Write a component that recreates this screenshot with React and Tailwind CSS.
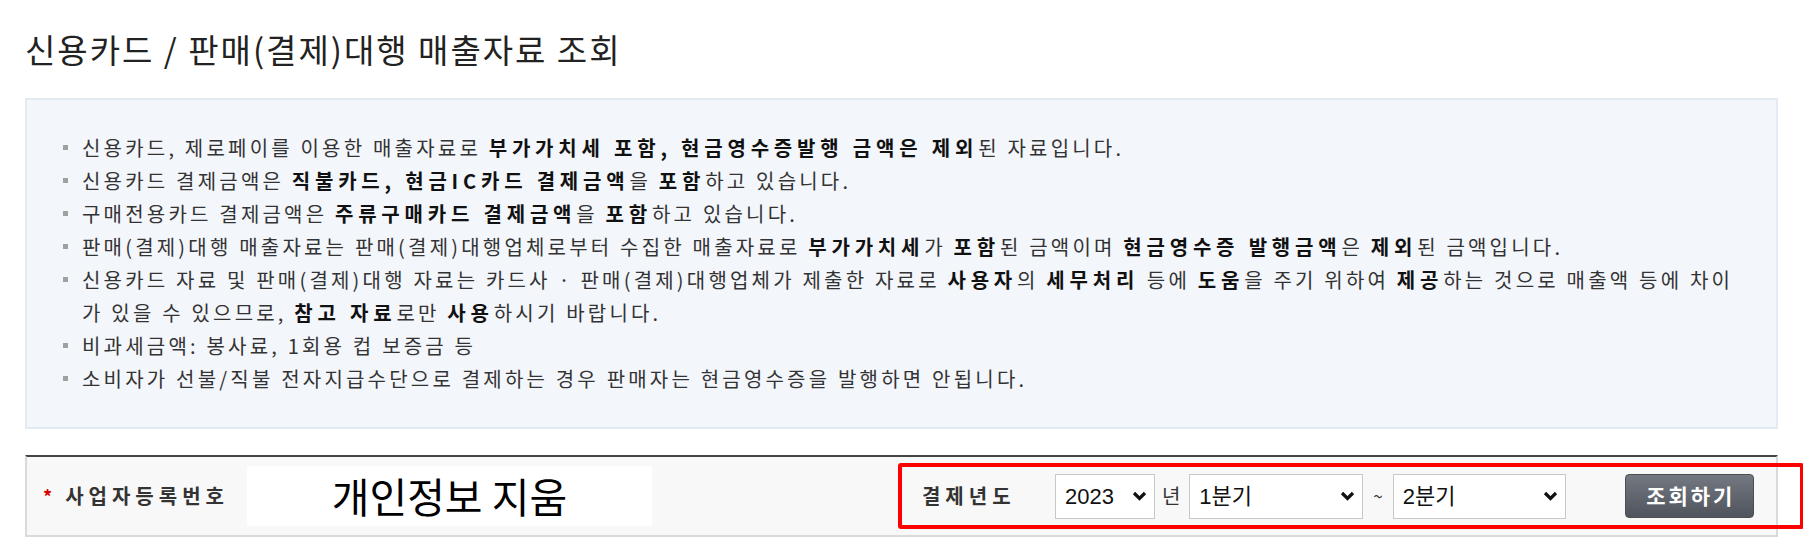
import React from 'react';

const KR = { fontFamily: '"Noto Sans CJK KR", "Noto Sans", sans-serif' };

const B = ({ children }) => <b className="font-bold tracking-[4.8px] text-[#111]">{children}</b>;

const notices = [
  [<>신용카드, 제로페이를 이용한 매출자료로 <B>부가가치세 포함, 현금영수증발행 금액은 제외</B>된 자료입니다.</>],
  [<>신용카드 결제금액은 <B>직불카드, 현금IC카드 결제금액</B>을 <B>포함</B>하고 있습니다.</>],
  [<>구매전용카드 결제금액은 <B>주류구매카드 결제금액</B>을 <B>포함</B>하고 있습니다.</>],
  [<>판매(결제)대행 매출자료는 판매(결제)대행업체로부터 수집한 매출자료로 <B>부가가치세</B>가 <B>포함</B>된 금액이며 <B>현금영수증 발행금액</B>은 <B>제외</B>된 금액입니다.</>],
  [
    <>신용카드 자료 및 판매(결제)대행 자료는 카드사 · 판매(결제)대행업체가 제출한 자료로 <B>사용자</B>의 <B>세무처리</B> 등에 <B>도움</B>을 주기 위하여 <B>제공</B>하는 것으로 매출액 등에 차이</>,
    <>가 있을 수 있으므로, <B>참고 자료</B>로만 <B>사용</B>하시기 바랍니다.</>,
  ],
  [<>비과세금액: 봉사료, 1회용 컵 보증금 등</>],
  [<>소비자가 선불/직불 전자지급수단으로 결제하는 경우 판매자는 현금영수증을 발행하면 안됩니다.</>],
];

const Chevron = () => (
  <svg width="15" height="10" viewBox="0 0 15 10" className="shrink-0">
    <path d="M2 2 L7.5 7.5 L13 2" fill="none" stroke="#111" strokeWidth="3.2" />
  </svg>
);

const Select = ({ value, width }) => (
  <div
    className={`flex h-[45px] items-center justify-between border border-[#c8c8c8] bg-white pl-[9px] pr-[7px] ${width}`}
  >
    <span className="text-[22px] text-[#111]" style={{ fontFamily: '"Liberation Sans", "Noto Sans CJK KR", sans-serif' }}>
      {value}
    </span>
    <Chevron />
  </div>
);

export default function App() {
  return (
    <div className="h-[554px] w-[1803px] bg-white px-[25px] pt-[29px]" style={KR}>
      <h1 className="h-[40px] text-[33px] font-normal leading-[40px] tracking-[2px] text-[#222]">
        신용카드 / 판매(결제)대행 매출자료 조회
      </h1>

      {/* notice box */}
      <div className="mt-[29px] h-[331px] border-2 border-[#e4eaf2] bg-[#f3f6fb] pl-[36px] pt-[31px]">
        <ul>
          {notices.map((lines, i) => (
            <li key={i} className="flex">
              <div className="flex h-[33px] w-[19px] shrink-0 items-center">
                <span className="h-[5px] w-[5px] bg-[#a0a0a0]" />
              </div>
              <div className="text-[20px] leading-[33px] tracking-[3.2px] text-[#333]">
                {lines.map((l, j) => (
                  <div key={j} className="whitespace-nowrap">{l}</div>
                ))}
              </div>
            </li>
          ))}
        </ul>
      </div>

      {/* search bar */}
      <div className="relative mt-[26px] flex h-[82px] items-center border-2 border-[#dadada] border-t-[#444] bg-[#f8f8f8]">
        <span className="ml-[16px] text-[18px] font-bold text-[#d40000]">*</span>
        <span className="ml-[13px] text-[20px] font-bold tracking-[5px] text-[#333]">사업자등록번호</span>
        <div className="ml-[18px] flex h-[60px] w-[405px] items-center justify-center bg-white text-[41px] text-black">
          개인정보 지움
        </div>

        <span className="ml-[270px] w-[133px] text-[20px] font-bold tracking-[5px] text-[#333]">결제년도</span>
        <Select value="2023" width="w-[100px]" />
        <span className="ml-[7px] mr-[9px] text-[20px] text-[#333]">년</span>
        <Select value="1분기" width="w-[174px]" />
        <span className="mx-[10px] text-[17px] text-[#333]">~</span>
        <Select value="2분기" width="w-[173px]" />
        <button className="ml-[59px] flex h-[44px] w-[129px] items-center justify-center rounded-[4px] border border-[#4a4e55] bg-gradient-to-b from-[#737881] to-[#50555d] pl-[3px] text-[21px] font-bold tracking-[3px] text-white">
          조회하기
        </button>

        {/* highlight annotation */}
        <div className="pointer-events-none absolute left-[871px] top-[6px] h-[66px] w-[906px] rounded-[3px] border-[4px] border-[#ff0000]" />
      </div>
    </div>
  );
}
